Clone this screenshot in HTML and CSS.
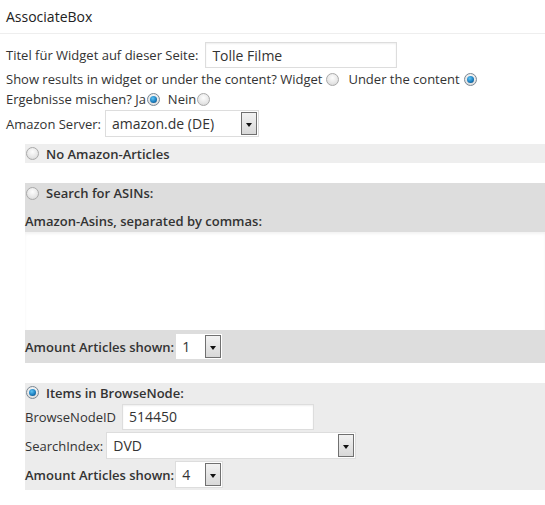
FILE: index.html
```html
<!DOCTYPE html>
<html>
<head>
<meta charset="utf-8">
<link rel="stylesheet" href="styles.css">
</head>
<body>
<div class="header">AssociateBox</div>
<div class="form">
  <div class="row row-title">
    <span class="label">Titel für Widget auf dieser Seite:</span>
    <input class="text title-input" type="text" value="Tolle Filme">
  </div>
  <div class="row row-line">
    <span>Show results in widget or under the content? Widget</span>
    <span class="radio"></span>
    <span class="sp">Under the content</span>
    <span class="radio checked"></span>
  </div>
  <div class="row row-line">
    <span>Ergebnisse mischen? Ja</span><span class="radio checked tight"></span>
    <span class="sp2">Nein</span><span class="radio tight"></span>
  </div>
  <div class="row row-server">
    <span class="label">Amazon Server:</span>
    <div class="select sel-server"><span class="val">amazon.de (DE)</span><span class="btn"></span></div>
  </div>

  <div class="sections">
    <div class="section sec-none">
      <div class="sec-head"><span class="radio"></span><span>No Amazon-Articles</span></div>
    </div>

    <div class="section sec-asin">
      <div class="sec-head"><span class="radio"></span><span>Search for ASINs:</span></div>
      <div class="asin-label">Amazon-Asins, separated by commas:</div>
      <textarea class="asins"></textarea>
      <div class="amount"><span class="label strong">Amount Articles shown:</span>
        <div class="select sel-num"><span class="val">1</span><span class="btn"></span></div>
      </div>
    </div>

    <div class="section sec-node">
      <div class="sec-head"><span class="radio checked"></span><span>Items in BrowseNode:</span></div>
      <div class="node-row"><span class="label">BrowseNodeID</span>
        <input class="text node-input" type="text" value="514450">
      </div>
      <div class="node-row"><span class="label label-index">SearchIndex:</span>
        <div class="select sel-index"><span class="val">DVD</span><span class="btn"></span></div>
      </div>
      <div class="node-row"><span class="label strong">Amount Articles shown:</span>
        <div class="select sel-num"><span class="val">4</span><span class="btn"></span></div>
      </div>
    </div>
  </div>
</div>
</body>
</html>
```
FILE: styles.css
```css
html, body {
  margin: 0;
  padding: 0;
  background: #fff;
}
body {
  font-family: "Open Sans", "Noto Sans", sans-serif;
  font-size: 13px;
  color: #333;
  width: 545px;
  overflow: hidden;
}
.header {
  height: 34px;
  box-sizing: border-box;
  padding: 7px 6px 0;
  font-size: 14px;
  color: #222;
  border-bottom: 1px solid #eee;
}
.form {
  padding: 7px 0 0 6px;
}
.row {
  display: flex;
  align-items: center;
}
.row-title {
  height: 28px;
}
.row-title .label {
  margin-right: 7px;
}
.text {
  font-family: "Open Sans", "Noto Sans", sans-serif;
  font-size: 14px;
  color: #333;
  border: 1px solid #ddd;
  box-shadow: inset 0 1px 2px rgba(0,0,0,0.07);
  background: #fff;
  box-sizing: border-box;
  margin: 0;
  outline: none;
}
.title-input {
  width: 192px;
  height: 26px;
  padding: 0 6px;
}
.row-line {
  height: 20px;
}
.radio {
  display: inline-block;
  width: 11px;
  height: 11px;
  border-radius: 50%;
  border: 1px solid #a9a9a9;
  background: radial-gradient(circle at 50% 35%, #fdfdfd 0%, #e6e6e6 60%, #cfcfcf 100%);
  box-sizing: content-box;
  margin: 0 5px 0 4px;
  position: relative;
  flex: none;
}
.radio.checked {
  border-color: #7a8894;
}
.radio.checked::after {
  content: "";
  position: absolute;
  left: 2px;
  top: 2px;
  width: 7px;
  height: 7px;
  border-radius: 50%;
  background: radial-gradient(circle at 40% 35%, #5fc4f4 0%, #1c7fc0 55%, #0b3a63 100%);
}
.radio.tight {
  margin: 0 0 0 1px;
}
.sp { margin-left: 4px; }
.sp2 { margin-left: 8px; }
.row-server {
  height: 29px;
}
.row-server .label {
  margin-right: 4px;
}
.select {
  display: flex;
  align-items: stretch;
  border: 1px solid #ddd;
  background: #fff;
  box-sizing: border-box;
  height: 27px;
  font-size: 14px;
  color: #333;
}
.select .val {
  flex: 1;
  display: flex;
  align-items: center;
  padding-left: 6px;
  white-space: nowrap;
}
.select .btn {
  width: 16px;
  margin: 1px 1px 1px 0;
  border: 1px solid #707070;
  box-sizing: border-box;
  background: linear-gradient(#f2f2f2, #d8d8d8);
  position: relative;
}
.select .btn::after {
  content: "";
  position: absolute;
  left: 4px;
  top: 10px;
  border-left: 3px solid transparent;
  border-right: 3px solid transparent;
  border-top: 4px solid #111;
}
.sel-server { width: 154px; }
.sel-num { width: 48px; }
.sel-index { width: 250px; }

.sections {
  margin: 6px 0 0 19px;
}
.section {
  margin-bottom: 20px;
}
.sec-head {
  display: flex;
  align-items: center;
  font-weight: 600;
  height: 19px;
}
.sec-head .radio {
  margin: 0 7px 0 1px;
}
.sec-none { background: #eee; }
.sec-asin {
  background: #ddd;
}
.sec-asin .sec-head { height: 20px; }
.asin-label {
  font-weight: 600;
  height: 29px;
  box-sizing: border-box;
  padding-top: 6px;
  display: flex;
  align-items: center;
}
.asins {
  display: block;
  width: 100%;
  height: 98px;
  margin: 0;
  border: none;
  box-shadow: inset 0 2px 3px rgba(0,0,0,0.05);
  background: #fff;
  resize: none;
  box-sizing: border-box;
}
.amount {
  height: 33px;
  display: flex;
  align-items: center;
}
.strong { font-weight: 600; }
.amount .label, .node-row .label.strong { margin-right: 1px; }
.sec-node {
  background: #ececec;
  padding-bottom: 1px;
}
.node-row {
  display: flex;
  align-items: center;
  height: 29px;
}
.sec-node .sec-head { height: 19px; }
.node-row .label { margin-right: 6px; }
.node-row .label.label-index { margin-right: 3px; }
.node-input {
  width: 192px;
  height: 26px;
  padding: 0 6px;
}
```
